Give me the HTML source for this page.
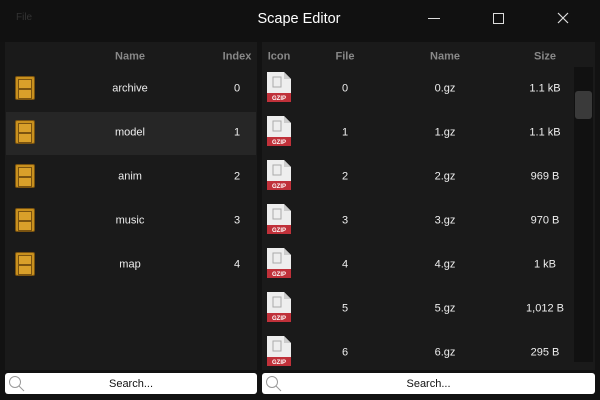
<!DOCTYPE html><html><head><style>
body{margin:0;width:600px;height:400px;background:#121212;font-family:"Liberation Sans",sans-serif;overflow:hidden;position:relative;color:#eee}
.a{position:absolute}
.t{font-size:11px;text-align:center;position:absolute;transform:translate(-50%,-45%);white-space:nowrap}
.h{color:#888;font-weight:bold}
.fold{position:absolute;width:20px;height:24px;background:#c8901e;border:1px solid #7a5310;border-radius:2px;box-sizing:border-box}
.fold:before,.fold:after{content:"";position:absolute;left:2px;right:2px;height:8px;border:1px solid #7a5310;background:#d9a02a}
.fold:before{top:2px}.fold:after{top:12px}
.gz{position:absolute;width:25px;height:30px}
.sb{position:absolute;top:373px;height:21px;background:#fff;border-radius:3px;color:#111;font-size:11px;text-align:center;line-height:22px}
</style></head><body>
<div class="a" style="left:0;top:0;width:600px;height:42px;background:#111"></div>
<div class="a" style="left:16px;top:12px;font-size:10px;color:#333">File</div>
<div class="t" style="left:299px;top:18px;font-size:14.5px;color:#fff">Scape Editor</div>
<div class="a" style="left:428px;top:18px;width:12px;height:1px;background:#ddd"></div>
<div class="a" style="left:493px;top:13px;width:9px;height:9px;border:1px solid #ddd"></div>
<svg class="a" style="left:557px;top:12px" width="12" height="12"><path d="M1 1L11 11M11 1L1 11" stroke="#ddd" stroke-width="1.2"/></svg>
<div class="a" style="left:5px;top:42px;width:252px;height:328px;background:#1a1a1a"></div>
<div class="a" style="left:262px;top:42px;width:333px;height:328px;background:#1a1a1a"></div>
<div class="a" style="left:6px;top:112px;width:250px;height:43px;background:#262626"></div>
<div class="a" style="left:574px;top:67px;width:19px;height:295px;background:#111"></div>
<div class="a" style="left:575px;top:91px;width:17px;height:28px;background:#3a3a3a;border-radius:3px"></div>
<div class="t h" style="left:130px;top:56px">Name</div>
<div class="t h" style="left:237px;top:56px">Index</div>
<div class="t h" style="left:279px;top:56px">Icon</div>
<div class="t h" style="left:345px;top:56px">File</div>
<div class="t h" style="left:445px;top:56px">Name</div>
<div class="t h" style="left:545px;top:56px">Size</div>
<div id="l"></div>
<script>
var n=["archive","model","anim","music","map"],h="";
n.forEach(function(s,i){var y=88+44*i;h+='<div class="fold" style="left:15px;top:'+(y-12)+'px"></div><div class="t" style="left:130px;top:'+y+'px">'+s+'</div><div class="t" style="left:237px;top:'+y+'px">'+i+'</div>';});
var sz=["1.1 kB","1.1 kB","969 B","970 B","1 kB","1,012 B","295 B"];
sz.forEach(function(s,i){var y=88+44*i;h+='<svg class="gz" style="left:266px;top:'+(y-16)+'px" viewBox="0 0 25 30"><path d="M1 0H18L25 7V30H1Z" fill="#eee"/><path d="M18 0V7H25" fill="#ccc"/><rect x="7" y="5" width="8" height="10" fill="none" stroke="#aaa"/><rect x="1" y="21" width="24" height="9" fill="#c0313a"/><text x="13" y="28" font-size="6" fill="#fff" text-anchor="middle" font-family="Liberation Sans" font-weight="bold">GZIP</text></svg><div class="t" style="left:345px;top:'+y+'px">'+i+'</div><div class="t" style="left:445px;top:'+y+'px">'+i+'.gz</div><div class="t" style="left:545px;top:'+y+'px">'+s+'</div>';});
document.getElementById("l").innerHTML=h;
</script>
<div class="sb" style="left:5px;width:252px">Search...</div>
<div class="sb" style="left:262px;width:333px">Search...</div>
<svg class="a" style="left:8px;top:375px" width="18" height="18"><circle cx="7" cy="7" r="5.5" fill="none" stroke="#999"/><path d="M11 11L16 16" stroke="#999"/></svg>
<svg class="a" style="left:265px;top:375px" width="18" height="18"><circle cx="7" cy="7" r="5.5" fill="none" stroke="#999"/><path d="M11 11L16 16" stroke="#999"/></svg>
</body></html>
